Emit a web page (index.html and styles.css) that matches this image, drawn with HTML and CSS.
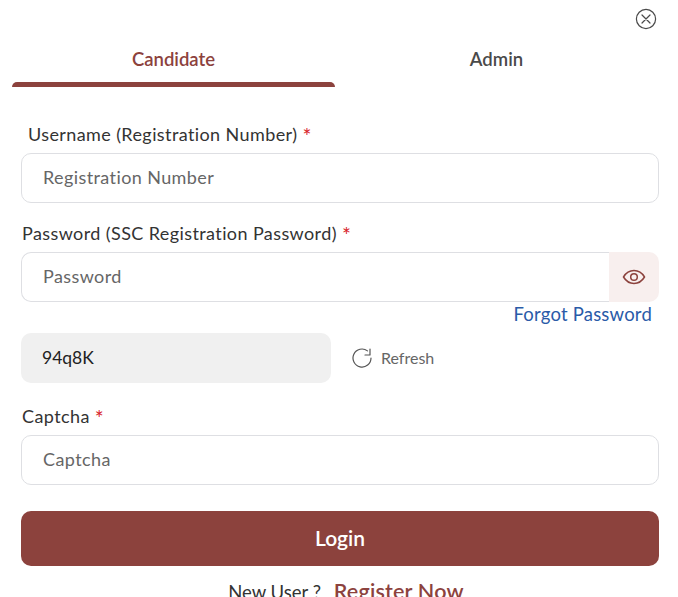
FILE: index.html
```html
<!DOCTYPE html>
<html lang="en">
<head>
  <meta charset="UTF-8">
  <title>Login</title>
  <meta name="viewport" content="width=device-width, initial-scale=1.0">
  <link rel="stylesheet" href="styles.css">
</head>
<body>

  <div class="close-row">
    <svg class="close-icon" width="22" height="22" viewBox="0 0 22 22" fill="none" stroke="#4a4a4a" stroke-width="1.2" stroke-linecap="round">
      <circle cx="11" cy="11" r="9.6"/>
      <path d="M7 7l8 8M15 7l-8 8"/>
    </svg>
  </div>

  <div class="tabs">
    <div class="tab active">
      <span>Candidate</span>
      <div class="tab-bar"></div>
    </div>
    <div class="tab">
      <span>Admin</span>
    </div>
  </div>

  <form class="form">
    <label class="label label-first">Username (Registration Number) <span class="req">*</span></label>
    <input class="input" type="text" placeholder="Registration Number">

    <label class="label">Password (SSC Registration Password) <span class="req">*</span></label>
    <div class="password-row">
      <input class="input input-password" type="password" placeholder="Password">
      <div class="eye-box">
        <svg width="24" height="24" viewBox="0 0 24 24" fill="none" stroke="#8c423d" stroke-width="1.5">
          <path d="M1.500 12C4 7.800 7.600 5.600 12 5.600s8 2.200 10.500 6.400c-2.500 4.200-6.100 6.400-10.500 6.400S4 16.200 1.500 12z"/>
          <circle cx="12" cy="12" r="3.300"/>
        </svg>
      </div>
    </div>
    <div class="forgot-row"><a class="forgot" href="#">Forgot Password</a></div>

    <div class="captcha-row">
      <div class="captcha-code">94q8K</div>
      <div class="refresh">
        <svg width="22" height="22" viewBox="0 0 22 22" fill="none" stroke="#555" stroke-width="1.2" stroke-linecap="round" stroke-linejoin="round">
          <path d="M15.500 3.900A9 9 0 1 0 19 11"/>
          <path d="M18 2v6h-5"/>
        </svg>
        <span class="refresh-text">Refresh</span>
      </div>
    </div>

    <label class="label label-captcha">Captcha <span class="req">*</span></label>
    <input class="input" type="text" placeholder="Captcha">

    <button class="login-btn" type="button">Login</button>

    <div class="register">New User ? <a class="register-link" href="#">Register Now</a></div>
  </form>

</body>
</html>
```

FILE: styles.css
```css
html, body {
  height: 100%;
  overflow: hidden;
}

body {
  margin: 0;
  background: #fff;
  color: #333;
  font-family: 'Lato', sans-serif;
}

.close-row {
  display: flex;
  justify-content: flex-end;
  padding: 8px 21px 0 0;
  height: 22px;
}

.close-icon {
  display: block;
}

.tabs {
  display: flex;
  margin: 0 20px 0 12px;
  height: 57px;
}

.tab {
  flex: 1;
  display: flex;
  flex-direction: column;
  align-items: center;
  font-size: 18.5px;
  font-weight: 600;
  line-height: 20px;
  padding-top: 19px;
  color: #4a4a4a;
  box-sizing: border-box;
}

.tab.active {
  color: #8c423d;
}

.tab-bar {
  width: 100%;
  height: 5px;
  margin-top: auto;
  background: #8c423d;
  border-radius: 5px 5px 0 0;
}

.form {
  padding: 0 19px 0 21px;
}

.label {
  display: block;
  height: 20px;
  font-size: 18px;
  letter-spacing: 0.4px;
  line-height: 20px;
  color: #333;
  margin: 20px 0 9px 1px;
}

.label-first {
  margin: 37px 0 9px 7px;
}

.label-captcha {
  margin-top: 23px;
}

.req {
  color: #d8232a;
  font-size: 21px;
  line-height: 18px;
  vertical-align: -3px;
}

.input {
  display: block;
  width: 100%;
  height: 50px;
  box-sizing: border-box;
  padding: 0 21px 2px;
  border: 1px solid #dedfe3;
  border-radius: 10px;
  outline: none;
  font-family: 'Lato', sans-serif;
  font-size: 18px;
  background: #fff;
}

.input::placeholder {
  color: #666;
  letter-spacing: 0.4px;
}

.password-row {
  display: flex;
}

.input-password {
  flex: 1;
  width: auto;
  min-width: 0;
  border-right: none;
  border-radius: 10px 0 0 10px;
}

.eye-box {
  width: 50px;
  height: 50px;
  display: flex;
  align-items: center;
  justify-content: center;
  background: #f8efee;
  border-radius: 0 10px 10px 0;
}

.forgot-row {
  display: flex;
  justify-content: flex-end;
  padding-right: 7px;
  height: 31px;
}

.forgot {
  font-size: 18.5px;
  letter-spacing: 0.2px;
  line-height: 24px;
  color: #2a5ba8;
  text-decoration: none;
}

.captcha-row {
  display: flex;
  align-items: center;
  gap: 21px;
}

.captcha-code {
  width: 310px;
  height: 50px;
  box-sizing: border-box;
  padding: 0 0 2px 21px;
  display: flex;
  align-items: center;
  background: #f0f0f0;
  border-radius: 10px;
  font-size: 17.5px;
  color: #222;
}

.refresh {
  display: flex;
  align-items: center;
  gap: 7px;
  font-size: 16px;
  color: #666;
}

.refresh-text {
  padding-bottom: 2px;
}

.login-btn {
  display: block;
  width: 100%;
  height: 55px;
  margin-top: 26px;
  padding-bottom: 3px;
  border: none;
  border-radius: 10px;
  background: #8c423d;
  color: #fff;
  font-family: 'Lato', sans-serif;
  font-size: 21px;
  font-weight: 600;
}

.register {
  text-align: center;
  margin-top: 13px;
  padding-left: 12px;
  font-size: 18.5px;
  line-height: 24px;
  color: #333;
}

.register-link {
  color: #8c423d;
  font-size: 21.5px;
  font-weight: 600;
  letter-spacing: 0.2px;
  margin-left: 8px;
  text-decoration: none;
}
```
